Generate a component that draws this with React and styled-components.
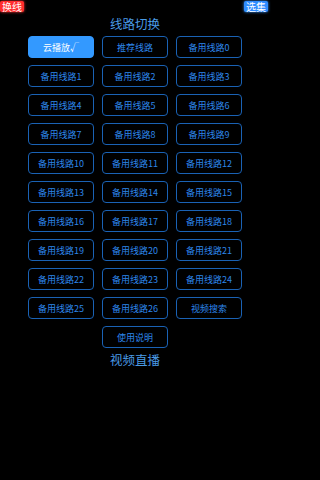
import styled, { createGlobalStyle } from "styled-components";

const GlobalStyle = createGlobalStyle`
	html, body {
		margin: 0;
		padding: 0;
		background: #000;
	}
	body {
		font-family: "Noto Sans CJK SC", "Noto Sans", sans-serif;
	}
`;

const Page = styled.div`
	width: 270px;
	min-height: 480px;
	background: #000;
	display: flex;
	flex-direction: column;
	align-items: center;
`;

const TopBar = styled.div`
	width: 100%;
	height: 12px;
	display: flex;
	justify-content: space-between;
	align-items: flex-start;
	padding: 1px 2px 0 0;
	box-sizing: border-box;
`;

const Badge = styled.span`
	display: flex;
	align-items: center;
	justify-content: center;
	height: 11px;
	padding: 0 2px;
	font-size: 10px;
	line-height: 11px;
	color: #fff;
	border-radius: 2px;
	background: ${(p) => (p.$red ? "#ff2d2d" : "#2f8cff")};
	box-shadow: 0 0 3px ${(p) => (p.$red ? "#ff3b3b" : "#3b95ff")};
`;

const Title = styled.div`
	margin-top: 4px;
	font-size: 12.5px;
	line-height: 16px;
	color: #4a9be6;
`;

const Grid = styled.div`
	margin-top: 4px;
	display: grid;
	grid-template-columns: repeat(3, 66px);
	grid-auto-rows: 22px;
	column-gap: 8px;
	row-gap: 7px;
`;

const LineButton = styled.button`
	box-sizing: border-box;
	height: 22px;
	margin: 0;
	padding: 0;
	border-radius: 4px;
	border: 1.5px solid ${(p) => (p.$active ? "#3399ff" : "#1a62b4")};
	background: ${(p) => (p.$active ? "#3399ff" : "transparent")};
	color: ${(p) => (p.$active ? "#fff" : "#2d86ea")};
	font-family: inherit;
	font-size: 9px;
	line-height: 19px;
	grid-column: ${(p) => p.$col || "auto"};
`;

const lines = ["推荐线路"];
for (let i = 0; i <= 26; i++) lines.push("备用线路" + i);
lines.push("视频搜索");

export default function App() {
	return (
		<>
			<GlobalStyle />
			<Page>
				<TopBar>
					<Badge $red>换线</Badge>
					<Badge>选集</Badge>
				</TopBar>
				<Title>线路切换</Title>
				<Grid>
					<LineButton $active>云播放√</LineButton>
					{lines.map((name) => (
						<LineButton key={name}>{name}</LineButton>
					))}
					<LineButton $col="2">使用说明</LineButton>
				</Grid>
				<Title>视频直播</Title>
			</Page>
		</>
	);
}
